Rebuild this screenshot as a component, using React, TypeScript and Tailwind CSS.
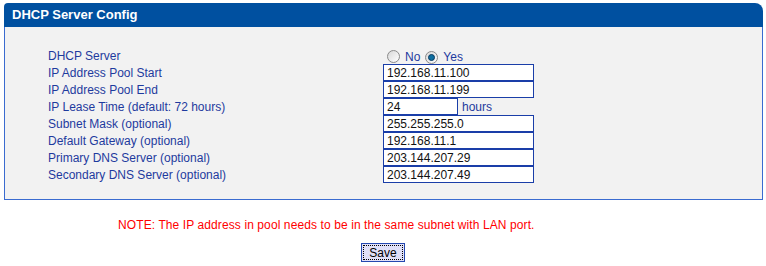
const rows = [
  { label: "IP Address Pool Start", value: "192.168.11.100" },
  { label: "IP Address Pool End", value: "192.168.11.199" },
  { label: "IP Lease Time (default: 72 hours)", value: "24", short: true },
  { label: "Subnet Mask (optional)", value: "255.255.255.0" },
  { label: "Default Gateway (optional)", value: "192.168.11.1" },
  { label: "Primary DNS Server (optional)", value: "203.144.207.29" },
  { label: "Secondary DNS Server (optional)", value: "203.144.207.49" },
];

function Radio({ checked }: { checked?: boolean }) {
  return (
    <span className="inline-flex w-[13px] h-[13px] rounded-full border border-[#8a8a8a] bg-gradient-to-br from-[#d8d8d8] to-white items-center justify-center">
      {checked && <span className="w-[7px] h-[7px] rounded-full bg-[#0f6fa0] border border-[#0a3a60]" />}
    </span>
  );
}

export default function App() {
  return (
    <div className="w-[766px] h-[266px] bg-white pt-[3px] px-[3px] text-[12px] font-['Liberation_Sans',Arial,sans-serif]">
      <div className="ml-[1px] w-[759px]">
        <div className="h-[24px] bg-[#0050a0] rounded-tl-[4px] rounded-tr-[8px] flex items-center pl-[8px] text-white font-bold text-[13px]">
          DHCP Server Config
        </div>
        <div className="bg-[#f2f2f2] border border-t-0 border-[#3a6bd0] pt-[20px] pb-[16px] pl-[43px] text-[#1e3a9e]">
          <div className="flex h-[17px] items-center">
            <div className="w-[335px]">DHCP Server</div>
            <div className="flex items-center pl-[4px] pt-[2px]">
              <Radio />
              <span className="ml-[5px]">No</span>
              <span className="ml-[5px]"><Radio checked /></span>
              <span className="ml-[5px]">Yes</span>
            </div>
          </div>
          {rows.map((r) => (
            <div key={r.label} className="flex h-[17px] items-center">
              <div className="w-[335px]">{r.label}</div>
              <div className={`h-[17px] ${r.short ? "w-[75px]" : "w-[151px]"} bg-white border border-[#1a3ea8] text-[#111] pl-[3px] flex items-center`}>
                {r.value}
              </div>
              {r.short && <span className="ml-[4px]">hours</span>}
            </div>
          ))}
        </div>
      </div>
      <div className="mt-[16px] pl-[115px] text-[#ff0000] tracking-[0.1px]">
        NOTE: The IP address in pool needs to be in the same subnet with LAN port.
      </div>
      <div className="mt-[9px] flex justify-center">
        <button className="h-[19px] w-[44px] bg-[#e0e0f8] border border-[#2448b0] p-[1px] text-black text-[12px]">
          <span className="flex h-full w-full items-center justify-center border border-dotted border-black">Save</span>
        </button>
      </div>
    </div>
  );
}
